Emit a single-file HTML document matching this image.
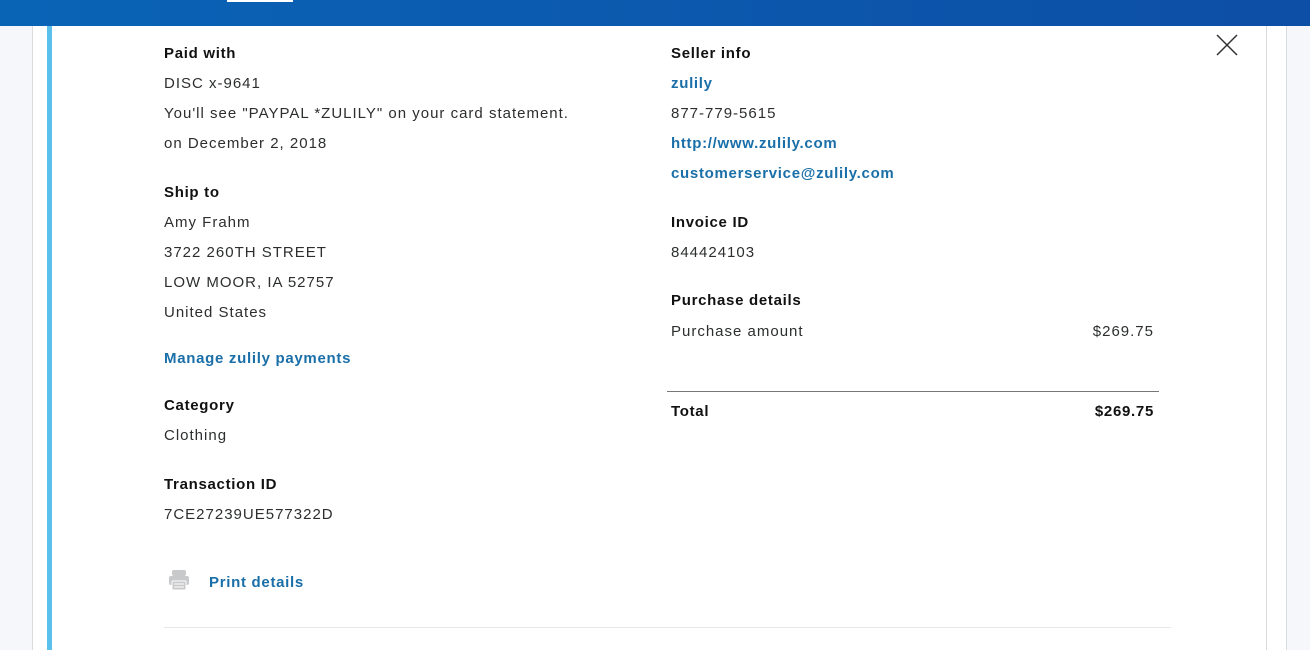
<!DOCTYPE html>
<html><head><meta charset="utf-8"><style>
*{margin:0;padding:0;box-sizing:border-box}
body{width:1310px;height:650px;overflow:hidden;background:#f5f7fa;font-family:"Liberation Sans",sans-serif;font-size:15px;color:#2c2e2f;letter-spacing:1px;position:relative}
.hdr{position:absolute;left:0;top:0;width:1310px;height:26px;background:linear-gradient(90deg,#0a64b6,#0d4ea6)}
.ul{position:absolute;left:227px;top:0;width:66px;height:2px;background:#fff}
.outer{position:absolute;left:32px;top:26px;width:1255px;height:624px;background:#fff;border-left:1px solid #d9dcdf;border-right:1px solid #d9dcdf}
.card{position:absolute;left:47px;top:26px;width:1220px;height:624px;background:#fff;border-left:5px solid #5bc0eb;border-right:1px solid #d9dcdf}
.t{position:absolute;white-space:nowrap;margin-top:2px}
.b{font-weight:bold;color:#111;letter-spacing:.7px}
.l{font-weight:bold;color:#1a6fa8;letter-spacing:.7px}
</style></head><body>
<div class="hdr"><div class="ul"></div></div>
<div class="outer"></div>
<div class="card"></div>
<svg style="position:absolute;left:1216px;top:34px" width="22" height="22"><path d="M1 1L21 21M21 1L1 21" stroke="#333" stroke-width="1.5"/></svg>

<div class="t b" style="left:164px;top:43px">Paid with</div>
<div class="t" style="left:164px;top:73px">DISC x-9641</div>
<div class="t" style="left:164px;top:103px">You'll see "PAYPAL *ZULILY" on your card statement.</div>
<div class="t" style="left:164px;top:133px">on December 2, 2018</div>
<div class="t b" style="left:164px;top:182px">Ship to</div>
<div class="t" style="left:164px;top:212px">Amy Frahm</div>
<div class="t" style="left:164px;top:242px">3722 260TH STREET</div>
<div class="t" style="left:164px;top:272px">LOW MOOR, IA 52757</div>
<div class="t" style="left:164px;top:302px">United States</div>
<div class="t l" style="left:164px;top:348px">Manage zulily payments</div>
<div class="t b" style="left:164px;top:395px">Category</div>
<div class="t" style="left:164px;top:425px">Clothing</div>
<div class="t b" style="left:164px;top:474px">Transaction ID</div>
<div class="t" style="left:164px;top:504px">7CE27239UE577322D</div>
<svg style="position:absolute;left:168px;top:569px" width="22" height="22"><rect x="4" y="1" width="14" height="6" rx="2" fill="#c8c9ca"/><rect x="1" y="7" width="20" height="9" rx="2" fill="#c8c9ca"/><rect x="4" y="12" width="14" height="9" rx="1" fill="#c8c9ca" stroke="#fff" stroke-width="1"/><path d="M6 15H16M6 18H16" stroke="#fff" stroke-width="1"/></svg>
<div class="t l" style="left:209px;top:572px">Print details</div>
<div style="position:absolute;left:164px;top:627px;width:1007px;height:1px;background:#e6e7e8"></div>

<div class="t b" style="left:671px;top:43px">Seller info</div>
<div class="t l" style="left:671px;top:73px">zulily</div>
<div class="t" style="left:671px;top:103px">877-779-5615</div>
<div class="t l" style="left:671px;top:133px">http://www.zulily.com</div>
<div class="t l" style="left:671px;top:163px">customerservice@zulily.com</div>
<div class="t b" style="left:671px;top:212px">Invoice ID</div>
<div class="t" style="left:671px;top:242px">844424103</div>
<div class="t b" style="left:671px;top:290px">Purchase details</div>
<div class="t" style="left:671px;top:321px">Purchase amount</div>
<div class="t" style="right:156px;top:321px">$269.75</div>
<div style="position:absolute;left:667px;top:391px;width:492px;height:1px;background:#777"></div>
<div class="t b" style="left:671px;top:401px">Total</div>
<div class="t b" style="right:156px;top:401px">$269.75</div>
</body></html>
